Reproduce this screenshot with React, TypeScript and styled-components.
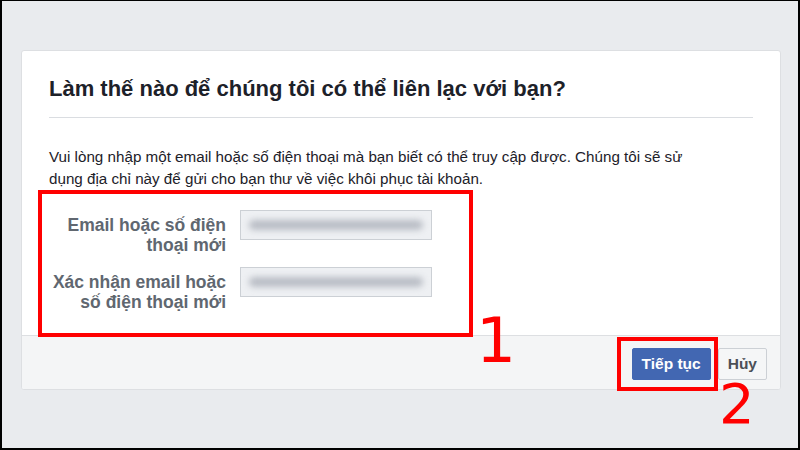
import styled, { createGlobalStyle } from "styled-components";

const GlobalStyle = createGlobalStyle`
    html, body {
        margin: 0;
        padding: 0;
        background: #e9ebee;
    }
    body {
        font-family: "Liberation Sans", Arial, sans-serif;
    }
`;

const Frame = styled.div`
    position: relative;
    width: 800px;
    height: 450px;
    box-sizing: border-box;
    border: solid #000;
    border-width: 1px 2px 2px 2px;
    background: #e9ebee;
    padding: 49px 0 0 19px;
    overflow: hidden;
`;

const Card = styled.div`
    width: 760px;
    box-sizing: border-box;
    background: #fff;
    border: 1px solid #dddfe2;
    border-radius: 3px;
    overflow: hidden;
`;

const Header = styled.div`
    margin: 0 27px;
    padding: 25px 0 15px;
    border-bottom: 1px solid #dadde1;
`;

const Title = styled.h2`
    margin: 0;
    font-size: 22px;
    line-height: 26px;
    font-weight: bold;
    color: #1d2129;
`;

const Body = styled.div`
    padding: 28px 27px 0;
    height: 217px;
    box-sizing: border-box;
`;

const Intro = styled.p`
    margin: 0;
    font-size: 15.2px;
    line-height: 22px;
    color: #1d2129;
    white-space: nowrap;
`;

const Form = styled.div`
    display: grid;
    grid-template-columns: 177px 192px;
    column-gap: 14px;
    row-gap: 12px;
    margin-top: 20px;
`;

const Label = styled.div`
    padding-top: 5px;
    text-align: right;
    font-size: 17.5px;
    line-height: 20px;
    font-weight: bold;
    color: #606770;
    white-space: nowrap;
`;

const Field = styled.div`
    height: 30px;
    box-sizing: border-box;
    border: 1px solid #ccd0d5;
    background: #eef0f3;
    display: flex;
    align-items: center;
    padding: 0 8px;
`;

const Blurred = styled.span`
    display: block;
    height: 10px;
    flex: 1;
    border-radius: 5px;
    background: #b9bdc5;
    filter: blur(3px);
`;

const Footer = styled.div`
    display: flex;
    justify-content: flex-end;
    gap: 7px;
    padding: 12px 13px 9px;
    background: #f4f5f6;
    border-top: 1px solid #dddfe2;
`;

const Button = styled.button<{ $primary?: boolean }>`
    height: 32px;
    padding: 0 9px;
    border-radius: 2px;
    border: 1px solid ${(p) => (p.$primary ? "#4267b2" : "#ccd0d5")};
    background: ${(p) => (p.$primary ? "#4267b2" : "#f5f6f7")};
    color: ${(p) => (p.$primary ? "#fff" : "#4b4f56")};
    font-family: "Liberation Sans", Arial, sans-serif;
    font-size: 15.5px;
    font-weight: bold;
`;

const Highlight = styled.div`
    position: absolute;
    box-sizing: border-box;
    border: 4px solid #ff0000;
`;

const Mark = styled.span<{ $size: number }>`
    position: absolute;
    font-family: "DejaVu Sans", sans-serif;
    font-size: ${(p) => p.$size}px;
    line-height: 0.75;
    color: #ff0000;
`;

export default function App() {
    return (
        <Frame>
            <GlobalStyle />
            <Card>
                <Header>
                    <Title>Làm thế nào để chúng tôi có thể liên lạc với bạn?</Title>
                </Header>
                <Body>
                    <Intro>
                        Vui lòng nhập một email hoặc số điện thoại mà bạn biết có thể truy cập được. Chúng tôi sẽ sử
                        <br />
                        dụng địa chỉ này để gửi cho bạn thư về việc khôi phục tài khoản.
                    </Intro>
                    <Form>
                        <Label>Email hoặc số điện<br />thoại mới</Label>
                        <Field><Blurred /></Field>
                        <Label>Xác nhận email hoặc<br />số điện thoại mới</Label>
                        <Field><Blurred /></Field>
                    </Form>
                </Body>
                <Footer>
                    <Button $primary>Tiếp tục</Button>
                    <Button>Hủy</Button>
                </Footer>
            </Card>
            <Highlight style={{ left: 36, top: 189, width: 435, height: 147 }} />
            <Highlight style={{ left: 615, top: 336, width: 101, height: 54 }} />
            <Mark $size={63} style={{ left: 474, top: 316 }}>1</Mark>
            <Mark $size={56} style={{ left: 717, top: 382 }}>2</Mark>
        </Frame>
    );
}
